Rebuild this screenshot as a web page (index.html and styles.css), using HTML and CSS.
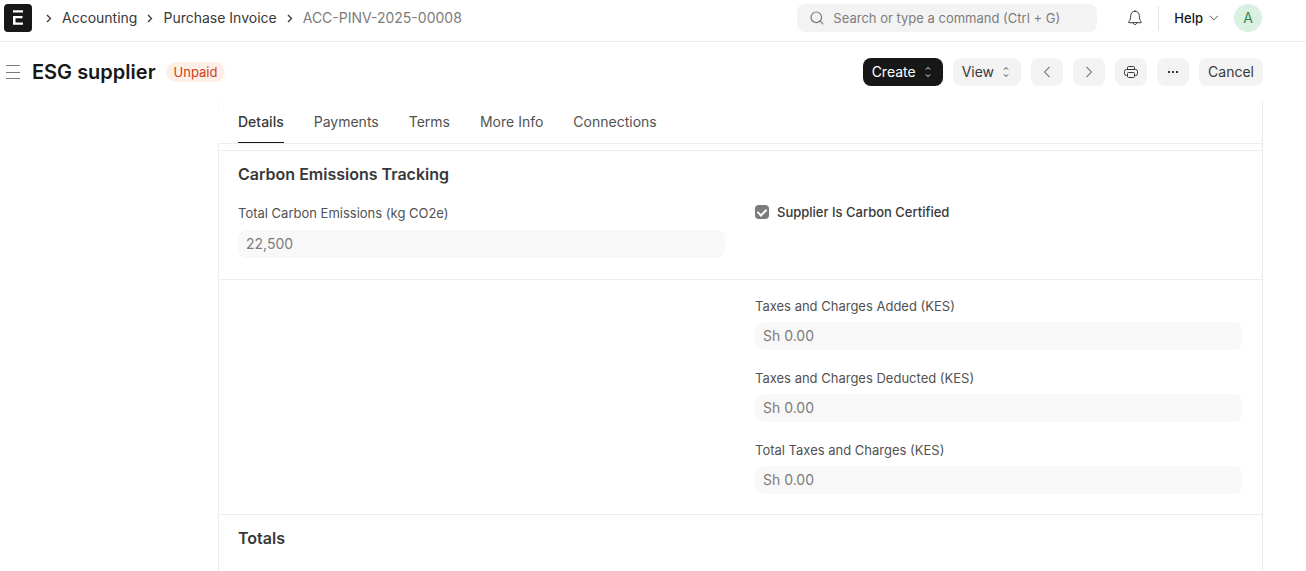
FILE: index.html
```html
<!DOCTYPE html>
<html lang="en">
<head>
<meta charset="utf-8">
<title>ACC-PINV-2025-00008</title>
<link rel="stylesheet" href="styles.css">
</head>
<body>
<header class="navbar">
  <a class="logo" href="#" aria-label="Home">
    <svg width="28" height="28" viewBox="0 0 28 28"><rect width="28" height="28" rx="4" fill="#171717"/><path d="M9 6.200h10v2.300H9zM9 12h9.500v2.300h-7v4.200H19v2.300H9z" fill="#fff"/></svg>
  </a>
  <nav class="breadcrumbs" aria-label="Breadcrumb">
    <svg class="sep" width="6" height="10" viewBox="0 0 6 10"><path d="M1 2 4.500 5.500 1 9"/></svg>
    <a href="#">Accounting</a>
    <svg class="sep" width="6" height="10" viewBox="0 0 6 10"><path d="M1 2 4.500 5.500 1 9"/></svg>
    <a href="#">Purchase Invoice</a>
    <svg class="sep" width="6" height="10" viewBox="0 0 6 10"><path d="M1 2 4.500 5.500 1 9"/></svg>
    <a class="current" href="#">ACC-PINV-2025-00008</a>
  </nav>
  <div class="search">
    <svg width="14" height="14" viewBox="0 0 14 14" fill="none" stroke="#7c7c7c" stroke-width="1.200" stroke-linecap="round"><circle cx="6.300" cy="6.300" r="5.300"/><path d="m10.200 10.200 2.600 2.600"/></svg>
    <input type="text" aria-label="Search" placeholder="Search or type a command (Ctrl + G)">
  </div>
  <button class="bell" aria-label="Notifications">
    <svg width="16" height="16" viewBox="0 0 16 16" fill="none" stroke="#383838" stroke-linejoin="round"><path d="M8 1.300c-2.600 0-4.300 1.900-4.300 4.400 0 3-.5 4.300-1.900 6v1h12.400v-1c-1.400-1.700-1.900-3-1.900-6 0-2.500-1.700-4.400-4.300-4.400z"/><path d="M6.200 12.900c.2 1.100.9 1.700 1.800 1.700s1.600-.6 1.800-1.700M8 .2v1"/></svg>
  </button>
  <button class="help">Help
    <svg width="10" height="6" viewBox="0 0 10 6" fill="none" stroke="#525252"><path d="m1 .8 4 4 4-4"/></svg>
  </button>
  <button class="avatar" aria-label="Account">A</button>
</header>

<div class="page-head">
  <button class="menu" aria-label="Toggle sidebar">
    <svg width="16" height="16" viewBox="0 0 16 16" stroke="#7c7c7c"><path d="M1 1.500h14M1 8.500h14M1 14.500h14"/></svg>
  </button>
  <h1>ESG supplier</h1>
  <span class="badge">Unpaid</span>
  <div class="actions">
    <button class="btn primary">Create
      <svg width="12" height="12" viewBox="0 0 12 12"><path d="M4 3.500 6 1.500l2 2M4 8.500l2 2 2-2"/></svg>
    </button>
    <button class="btn">View
      <svg width="12" height="12" viewBox="0 0 12 12"><path d="M4 3.500 6 1.500l2 2M4 8.500l2 2 2-2"/></svg>
    </button>
    <button class="btn icon" aria-label="Previous"><svg width="16" height="16" viewBox="0 0 16 16"><path d="M10.500 3 5.500 8l5 5"/></svg></button>
    <button class="btn icon" aria-label="Next"><svg width="16" height="16" viewBox="0 0 16 16"><path d="m5.500 3 5 5-5 5"/></svg></button>
    <button class="btn icon" aria-label="Print"><svg width="16" height="16" viewBox="0 0 16 16"><path d="M4.500 5.500V3.500q0-1 1-1h5q1 0 1 1v2M4.500 11.500h-1Q1.500 11.500 1.500 9.500v-2q0-2 2-2h9q2 0 2 2v2q0 2-2 2h-1M5.500 8.500h5q1 0 1 1v3q0 1-1 1h-5q-1 0-1-1v-3q0-1 1-1z"/></svg></button>
    <button class="btn icon" aria-label="More"><svg class="dots" width="16" height="16" viewBox="0 0 16 16"><path d="M3 7h2v2H3zM7 7h2v2H7zM11 7h2v2h-2z"/></svg></button>
    <button class="btn">Cancel</button>
  </div>
</div>

<main class="form">
  <nav class="tabs" aria-label="Form tabs">
    <a class="active" href="#">Details</a>
    <a href="#">Payments</a>
    <a href="#">Terms</a>
    <a href="#">More Info</a>
    <a href="#">Connections</a>
  </nav>
  <div class="sections">
    <section class="carbon">
      <h2>Carbon Emissions Tracking</h2>
      <div class="columns">
        <div class="field">
          <label for="emissions">Total Carbon Emissions (kg CO2e)</label>
          <input id="emissions" type="text" value="22,500" readonly>
        </div>
        <label class="check"><input type="checkbox" checked>Supplier Is Carbon Certified</label>
      </div>
    </section>
    <section class="taxes">
      <div class="columns">
        <div class="stack">
          <div class="field">
            <label for="added">Taxes and Charges Added (KES)</label>
            <input id="added" type="text" value="Sh 0.00" readonly>
          </div>
          <div class="field">
            <label for="deducted">Taxes and Charges Deducted (KES)</label>
            <input id="deducted" type="text" value="Sh 0.00" readonly>
          </div>
          <div class="field">
            <label for="total">Total Taxes and Charges (KES)</label>
            <input id="total" type="text" value="Sh 0.00" readonly>
          </div>
        </div>
      </div>
    </section>
    <section class="totals">
      <h2>Totals</h2>
    </section>
  </div>
</main>
</body>
</html>
```
FILE: styles.css
```css
* { box-sizing: border-box; }
body {
  margin: 0;
  min-height: 100vh;
  display: flex;
  flex-direction: column;
  background: #fff;
  color: #383838;
  font: 14px/20px Inter, "Liberation Sans", sans-serif;
}
button, input { font: inherit; color: inherit; border: 0; margin: 0; padding: 0; background: none; }
a { color: inherit; text-decoration: none; }
svg { display: block; flex: none; }
h1, h2 { margin: 0; }

.navbar {
  display: flex;
  align-items: center;
  height: 42px;
  padding: 0 44px 5px 4px;
  border-bottom: 1px solid #ededed;
}
.breadcrumbs { display: flex; align-items: center; gap: 10px; margin-left: 14px; }
.sep { fill: none; stroke: #383838; stroke-width: 1.3; }
.current { color: #7c7c7c; }
.search {
  display: flex;
  align-items: center;
  gap: 9px;
  width: 300px;
  height: 28px;
  margin-left: auto;
  padding: 0 13px;
  border-radius: 8px;
  background: #f3f3f3;
  font-size: 13px;
}
.search input { flex: 1; min-width: 0; }
.search input::placeholder { color: #7c7c7c; opacity: 1; }
.bell { margin: 0 15px 0 30px; }
.help {
  display: flex;
  align-items: center;
  gap: 6px;
  height: 25px;
  margin-right: 15px;
  padding-left: 15px;
  border-left: 1px solid #e2e2e2;
  color: #171717;
  font-size: 13px;
  font-weight: 500;
}
.avatar { width: 28px; height: 28px; border-radius: 50%; background: #daf0e1; color: #30865a; }

.page-head { display: flex; align-items: center; height: 60px; padding: 0 43px 0 5px; }
h1 { margin: 0 10px 0 11px; color: #171717; font-size: 20px; line-height: 24px; font-weight: 600; }
.badge { padding: 0 8px; border-radius: 10px; background: #fff0e7; color: #cc4121; font-size: 13px; line-height: 20px; }
.actions { display: flex; gap: 10px; margin-left: auto; }
.btn { display: flex; align-items: center; gap: 6px; height: 28px; padding: 0 9px; border-radius: 8px; background: #f3f3f3; }
.btn.icon { padding: 0 8px; }
.btn svg { fill: none; stroke: currentColor; }
.btn .dots { fill: currentColor; stroke: none; }
.btn.primary { background: #171717; color: #fff; }

.form { flex: 1; display: flex; flex-direction: column; margin: 0 43px 0 218px; border-right: 1px solid #ededed; }
.tabs {
  display: flex;
  gap: 30px;
  height: 42px;
  padding: 0 20px;
  border-bottom: 1px solid #ededed;
  background: linear-gradient(#ededed, #fff) no-repeat left top / 1px 8px;
  color: #525252;
}
.tabs a { padding: 10px 0; }
.tabs .active { border-bottom: 1px solid #171717; color: #383838; font-weight: 500; }
.sections { flex: 1; padding-top: 6px; border-left: 1px solid #ededed; }
section { padding: 13px 20px 21px 19px; border-top: 1px solid #ededed; }
h2 { font-size: 16px; line-height: 20px; font-weight: 600; }
.columns { display: grid; grid-template-columns: 1fr 1fr; gap: 30px; }
.carbon .columns { margin-top: 19px; }
.field { display: flex; flex-direction: column; gap: 7px; }
.field label { color: #525252; font-size: 13px; line-height: 20px; }
.field input { width: 100%; height: 28px; padding: 0 8px 2px; border-radius: 8px; background: #f8f8f8; color: #7c7c7c; }
.check { display: flex; gap: 8px; height: 18px; align-items: center; font-size: 13px; font-weight: 500; }
.check input {
  appearance: none;
  width: 14px;
  height: 14px;
  border-radius: 4px;
  background: #7c7c7c;
  display: grid;
  place-items: center;
}
.check input:checked::after {
  content: "";
  width: 4px;
  height: 7px;
  margin-bottom: 2px;
  border: solid #fff;
  border-width: 0 2px 2px 0;
  transform: rotate(45deg);
}
.taxes { padding-top: 16px; padding-bottom: 20px; }
.taxes .field { gap: 6px; }
.stack { display: flex; flex-direction: column; gap: 18px; grid-column: 2; }
```
